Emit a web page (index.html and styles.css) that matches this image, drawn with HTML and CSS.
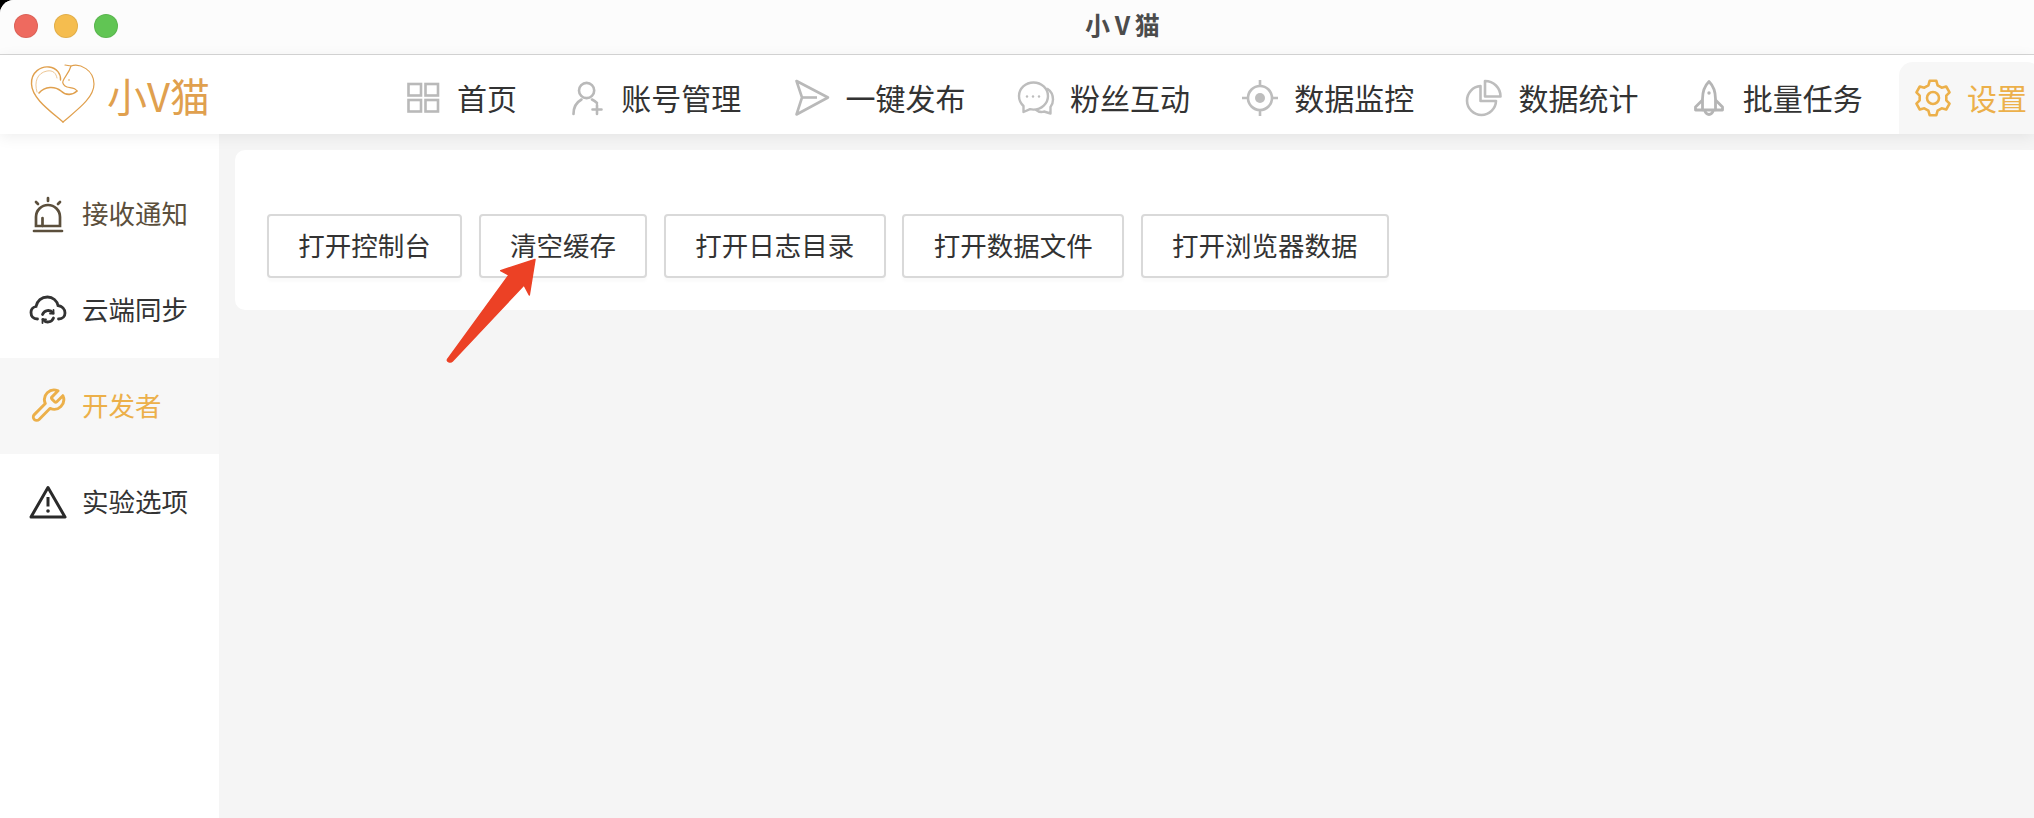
FILE: index.html
```html
<!DOCTYPE html>
<html lang="zh-CN">
<head>
  <meta charset="UTF-8">
  <meta name="viewport" content="width=device-width, initial-scale=1.0">
  <title>小V猫</title>
  <link rel="stylesheet" href="styles.css">
</head>
<body>
  <div class="window">
    <div class="titlebar">
      <span class="light light-red"></span>
      <span class="light light-yellow"></span>
      <span class="light light-green"></span>
      <span class="window-title">小 V 猫</span>
    </div>

    <header class="header">
      <div class="brand">
        <svg class="brand-mark" viewBox="0 0 80 70" width="80" height="70" fill="none" stroke="#e0a04e" stroke-linecap="round">
          <path stroke-width="1.4" d="M38 62C24 50 7 38 6.5 24C6 12 16 6 24 7C32 8 36 14 35.5 20"/>
          <path stroke-width="1" opacity=".6" d="M12 32C9 22 12 13 22 11C28 10 31 13 32 18"/>
          <path stroke-width="1.6" d="M14 33C20 26 30 26 36 31C41 36 48 35 52 31"/>
          <path stroke-width="1.2" d="M52 31C50 27 45 28 42 27C39 26 37 23 38 21C40 16 44 13 46 6"/>
          <path stroke-width="1.2" d="M46 6L40 5M46 6C55 3 69 10 69 24C69 38 52 50 38 62"/>
          <circle cx="44" cy="20" r=".8" fill="#e0a04e" stroke="none"/>
        </svg>
        <span class="brand-name">小V猫</span>
      </div>

      <nav class="nav">
        <a class="nav-item">
          <svg class="icon" viewBox="0 0 40 40" fill="none" stroke="#b9b9b9" stroke-width="2.6">
            <rect x="5.5" y="6" width="12.5" height="11.5"/>
            <rect x="22.5" y="6" width="12.5" height="11.5"/>
            <rect x="5.5" y="22" width="12.5" height="11.5"/>
            <rect x="22.5" y="22" width="12.5" height="11.5"/>
          </svg>
          <span class="label">首页</span>
        </a>
        <a class="nav-item">
          <svg class="icon" viewBox="0 0 40 40" fill="none" stroke="#b9b9b9" stroke-width="2.6" stroke-linecap="round">
            <circle cx="19.6" cy="12.5" r="7.6"/>
            <path d="M6.5 36C6.5 29 10 24 14.5 21.5M25 21.5C27 22.5 28.500 23.500 30 25"/>
            <path d="M30 27V36M25.500 31.500H34.500"/>
          </svg>
          <span class="label">账号管理</span>
        </a>
        <a class="nav-item">
          <svg class="icon" viewBox="0 0 40 40" fill="none" stroke="#b9b9b9" stroke-width="2.6" stroke-linejoin="round">
            <path d="M4.500 3L36 19.500L4.500 36.500L10 19.500Z"/>
            <path d="M10 19.500H25"/>
          </svg>
          <span class="label">一键发布</span>
        </a>
        <a class="nav-item">
          <svg class="icon" viewBox="0 0 40 40" fill="none" stroke="#bdbdbd" stroke-width="2.4" stroke-linejoin="round">
            <path d="M17.500 4.500C9.500 4.500 3 10.500 3 18C3 22 4.800 25.500 7.500 28V34L14 31.200C15.200 31.500 16.300 31.600 17.500 31.600C25.500 31.600 32 25.500 32 18C32 10.500 25.500 4.500 17.500 4.500Z"/>
            <path d="M31 10.500C35 13 37 17 37 21.500C37 25 35.800 27.500 34.500 29V35.500L28 33.500C25.500 34.500 22.500 34 19.500 31.500"/>
            <g fill="#bdbdbd" stroke="none">
              <circle cx="11" cy="18.500" r="1.200"/>
              <circle cx="17" cy="18.500" r="1.200"/>
              <circle cx="23" cy="18.500" r="1.200"/>
            </g>
          </svg>
          <span class="label">粉丝互动</span>
        </a>
        <a class="nav-item">
          <svg class="icon" viewBox="0 0 40 40" fill="none" stroke="#bdbdbd" stroke-width="2.6">
            <circle cx="20" cy="20" r="12"/>
            <circle cx="20" cy="20" r="5" fill="#bdbdbd" stroke="none"/>
            <path d="M20 2V8M20 32V38M2 20H8M32 20H38"/>
          </svg>
          <span class="label">数据监控</span>
        </a>
        <a class="nav-item">
          <svg class="icon" viewBox="0 0 40 40" fill="none" stroke="#bdbdbd" stroke-width="2.6" stroke-linejoin="round">
            <path d="M16.500 8A14.500 14.500 0 1 0 32 23H16.500Z"/>
            <path d="M21 3V18.500H36.500A15.500 15.500 0 0 0 21 3Z"/>
          </svg>
          <span class="label">数据统计</span>
        </a>
        <a class="nav-item">
          <svg class="icon" viewBox="0 0 40 40" fill="none" stroke="#b5b5b5" stroke-width="2.8" stroke-linejoin="round">
            <path d="M20 3.500C15.500 8 13.500 14 13.500 21V32H26.500V21C26.500 14 24.500 8 20 3.500Z"/>
            <path d="M13.500 22L6.500 29V32H13.500M26.500 22L33.500 29V32H26.500"/>
            <path d="M15.500 32C16.500 35 18 36.500 20 36.500C22 36.500 23.500 35 24.500 32"/>
            <circle cx="20" cy="15" r="1.700" fill="#b5b5b5" stroke="none"/>
          </svg>
          <span class="label">批量任务</span>
        </a>
        <a class="nav-item nav-item-active">
          <svg class="icon" viewBox="0 0 40 40" fill="none" stroke="#ecb04a" stroke-width="2.6" stroke-linejoin="round">
            <path d="M15.380 7.310L16.660 2.820H23.340L24.620 7.310L28.680 9.650L33.210 8.520L36.550 14.300L33.300 17.660V22.340L36.550 25.700L33.210 31.480L28.680 30.350L24.620 32.690L23.340 37.180H16.660L15.380 32.690L11.320 30.350L6.790 31.480L3.450 25.700L6.700 22.340V17.660L3.450 14.300L6.790 8.520L11.320 9.650Z"/>
            <circle cx="20" cy="20" r="6"/>
          </svg>
          <span class="label">设置</span>
        </a>
      </nav>
    </header>

    <div class="main">
      <aside class="sidebar">
        <a class="side-item side-item-brown">
          <svg class="icon" viewBox="0 0 40 40" fill="none" stroke="#5b4f3c" stroke-width="2.700" stroke-linecap="round">
            <path d="M9 32V23A12 12 0 0 1 33 23V32Z"/>
            <path d="M7 37H35M21 4V7M9 8L11 10M33 8L31 10M15.500 24V32"/>
          </svg>
          <span class="label">接收通知</span>
        </a>
        <a class="side-item">
          <svg class="icon" viewBox="0 0 40 40" fill="none" stroke="#333" stroke-width="2.800" stroke-linecap="round">
            <path d="M10.500 29C6 29 4 26 4 22.500C4 19 6.500 17 9 16.500C10 11 14.500 7 20.500 7C26 7 30 11 31 15.500C35 16 38 19 38 23C38 26 36 29 31.500 29"/>
            <path d="M15.500 24.500A6 6 0 0 1 26 23M26.500 28A6 6 0 0 1 16 29.500"/>
            <path d="M26.500 20V23.500H23M15.500 33V29.500H19" stroke-width="1.800"/>
          </svg>
          <span class="label">云端同步</span>
        </a>
        <a class="side-item side-item-active">
          <svg class="icon" viewBox="0 0 40 40" fill="none" stroke="#ecb04a" stroke-linejoin="round">
            <path transform="translate(1.500 .8) scale(1.6)" stroke-width="1.8" d="M14.700 6.300a1 1 0 0 0 0 1.400l1.600 1.600a1 1 0 0 0 1.400 0l3.770-3.770a6 6 0 0 1-7.940 7.940l-6.910 6.910a2.120 2.120 0 0 1-3-3l6.910-6.910a6 6 0 0 1 7.940-7.940l-3.760 3.760z"/>
          </svg>
          <span class="label">开发者</span>
        </a>
        <a class="side-item">
          <svg class="icon" viewBox="0 0 40 40" fill="none" stroke="#2a2a2a" stroke-width="3" stroke-linejoin="round">
            <path d="M21 5.500L38 35H4Z"/>
            <path d="M21 15V24.500"/>
            <circle cx="21" cy="29" r="1.800" fill="#2a2a2a" stroke="none"/>
          </svg>
          <span class="label">实验选项</span>
        </a>
      </aside>

      <section class="content">
        <div class="card">
          <button class="btn"><span class="label">打开控制台</span></button>
          <button class="btn"><span class="label">清空缓存</span></button>
          <button class="btn"><span class="label">打开日志目录</span></button>
          <button class="btn"><span class="label">打开数据文件</span></button>
          <button class="btn"><span class="label">打开浏览器数据</span></button>
        </div>
      </section>
    </div>

    <!-- red annotation arrow on top of the screenshot -->
    <svg class="arrow" viewBox="0 0 100 120" width="100" height="120">
      <path fill="#ec4125" stroke="#ec4125" stroke-width="1.500" stroke-linejoin="round" d="M95 9.500L60.700 20.700L69 25L7.500 109.500C6.500 111.500 10.500 113 12.500 111L84 35L89.300 45Z"/>
    </svg>
  </div>
</body>
</html>
```

FILE: styles.css
```css
* { box-sizing: border-box; }
html, body { height: 100%; }
body { margin: 0; background: #000; overflow: hidden; font-family: "Noto Sans CJK SC", "Liberation Sans", sans-serif; color: #333; }

.window { position: relative; display: flex; flex-direction: column; height: 100%; background: #fff; border-top-left-radius: 14px; overflow: hidden; }

.titlebar { display: flex; align-items: center; flex: none; height: 55px; padding: 0 0 3px 14px; gap: 16px; background: #fcfcfc; border-bottom: 1px solid #d6d6d6; }
.light { width: 24px; height: 24px; border-radius: 50%; border: 1px solid rgba(0,0,0,0.08); }
.light-red { background: #ee6a5f; }
.light-yellow { background: #f5bd4f; }
.light-green { background: #61c554; }
.window-title { margin: 0 0 3px 951px; font-size: 25px; font-weight: 700; color: #4c4c4c; white-space: nowrap; word-spacing: -1px; }

.label { display: block; padding-bottom: 3px; }

.header { position: relative; z-index: 1; display: flex; align-items: center; flex: none; height: 79px; padding-left: 25px; background: #fff; box-shadow: 0 3px 14px rgba(0,0,0,0.07); }
.brand { display: flex; align-items: center; gap: 2px; flex: none; width: 364px; }
.brand-name { font-size: 40px; line-height: 1; color: #e0a04e; }

.nav { display: flex; align-self: flex-end; gap: 22.3px; height: 72px; }
.nav-item { display: flex; align-items: center; gap: 14px; padding: 0 14px; font-size: 30px; color: #333; white-space: nowrap; border-radius: 14px 14px 0 0; }
.nav-item-active { color: #ecb04a; background: #f7f7f7; }
.icon { flex: none; width: 40px; height: 40px; }

.main { display: flex; flex: 1; min-height: 0; }

.sidebar { flex: none; width: 219px; padding-top: 32px; background: #fff; }
.side-item { display: flex; align-items: center; gap: 15px; height: 96px; padding-left: 27px; font-size: 26.5px; color: #333; }
.side-item-brown { color: #5b4f3c; }
.side-item-active { color: #ecb04a; background: #f7f7f7; }

.content { flex: 1; padding: 16px 0 0 16px; background: #f5f5f5; }
.card { display: flex; gap: 16.8px; height: 160px; margin-right: -20px; padding: 64px 0 0 32px; background: #fff; border-radius: 10px; }

.btn { height: 64px; padding: 0 29.25px; font-family: inherit; font-size: 26.5px; color: #333; background: #fff; border: 2px solid #d9d9d9; border-radius: 4px; box-shadow: 0 4px 3px rgba(0,0,0,0.02); white-space: nowrap; cursor: pointer; }

.arrow { position: absolute; left: 440px; top: 250px; }
```
